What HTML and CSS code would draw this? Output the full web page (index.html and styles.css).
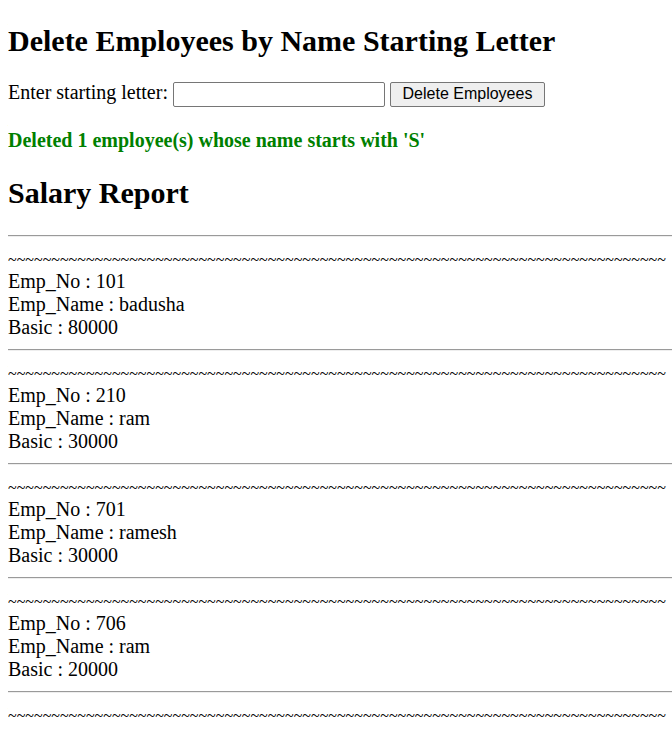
FILE: index.html
```html
<!DOCTYPE html>
<html>
<head>
<meta charset="utf-8">
<title>Delete Employees</title>
<link rel="stylesheet" href="styles.css">
</head>
<body>
<h1 class="title">Delete Employees by Name Starting Letter</h1>
<form class="form">
Enter starting letter: <input type="text" class="letter"> <button type="button" class="btn">Delete Employees</button>
</form>
<p class="msg">Deleted 1 employee(s) whose name starts with 'S'</p>
<h2 class="heading">Salary Report</h2>
<div class="report">
<hr>
<span class="tilde">~~~~~~~~~~~~~~~~~~~~~~~~~~~~~~~~~~~~~~~~~~~~~~~~~~~~~~~~~~~~~~~~~~~~~~~~~~~~</span><br>
Emp_No : 101<br>
Emp_Name : badusha<br>
Basic : 80000<br>
<hr>
<span class="tilde">~~~~~~~~~~~~~~~~~~~~~~~~~~~~~~~~~~~~~~~~~~~~~~~~~~~~~~~~~~~~~~~~~~~~~~~~~~~~</span><br>
Emp_No : 210<br>
Emp_Name : ram<br>
Basic : 30000<br>
<hr>
<span class="tilde">~~~~~~~~~~~~~~~~~~~~~~~~~~~~~~~~~~~~~~~~~~~~~~~~~~~~~~~~~~~~~~~~~~~~~~~~~~~~</span><br>
Emp_No : 701<br>
Emp_Name : ramesh<br>
Basic : 30000<br>
<hr>
<span class="tilde">~~~~~~~~~~~~~~~~~~~~~~~~~~~~~~~~~~~~~~~~~~~~~~~~~~~~~~~~~~~~~~~~~~~~~~~~~~~~</span><br>
Emp_No : 706<br>
Emp_Name : ram<br>
Basic : 20000<br>
<hr>
<span class="tilde">~~~~~~~~~~~~~~~~~~~~~~~~~~~~~~~~~~~~~~~~~~~~~~~~~~~~~~~~~~~~~~~~~~~~~~~~~~~~</span><br>
</div>
</body>
</html>
```
FILE: styles.css
```css
html, body {
  font-family: "Liberation Serif", "Times New Roman", serif;
  font-size: 20px;
  color: #000;
  background: #fff;
}
body {
  margin: 8px 0 8px 8px;
}
.title {
  font-size: 30px;
  font-weight: bold;
  margin: 16px 0 23px;
}
.form {
  margin: 0;
  white-space: nowrap;
}
.letter {
  font-family: "Liberation Sans", Arial, sans-serif;
  font-size: 16px;
  width: 212px;
  height: 25px;
  box-sizing: border-box;
  padding: 1px 2px;
  margin: 0;
  border: 1px solid #767676;
  border-radius: 2px;
  background: #fff;
}
.btn {
  font-family: "Liberation Sans", Arial, sans-serif;
  font-size: 16px;
  width: 155px;
  height: 25px;
  box-sizing: border-box;
  padding: 1px 6px;
  margin: 0;
  border: 1px solid #767676;
  border-radius: 2px;
  background: #efefef;
  color: #000;
}
.msg {
  color: #008000;
  font-weight: bold;
  margin: 22px 0 24px;
}
.heading {
  font-size: 30px;
  font-weight: bold;
  margin: 24px 0 25px;
}
.report {
  white-space: nowrap;
}
.tilde {
  font-size: 16px;
}
hr {
  margin: 10px 0;
  border: none;
  border-top: 1px solid #9a9a9a;
  border-bottom: 1px solid #eeeeee;
}
```
